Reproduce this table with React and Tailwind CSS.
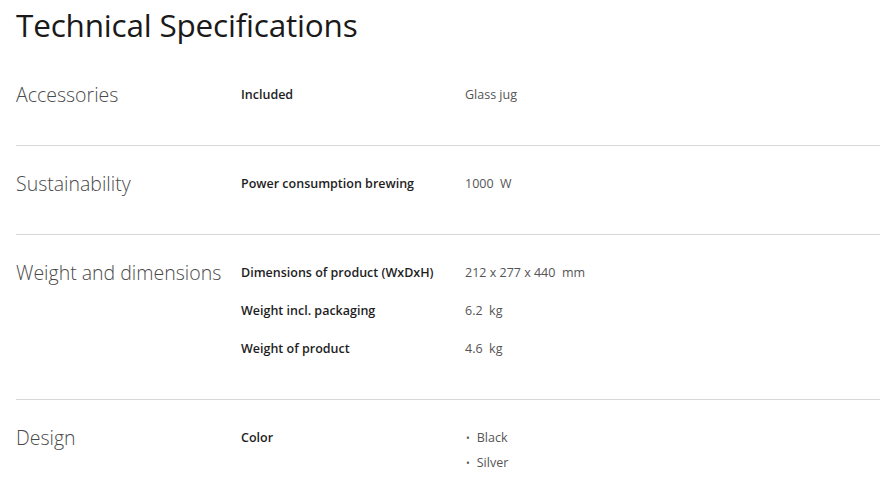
const specs = [
  {
    category: "Accessories",
    rows: [{ name: "Included", values: ["Glass jug"] }],
  },
  {
    category: "Sustainability",
    rows: [{ name: "Power consumption brewing", values: ["1000  W"] }],
  },
  {
    category: "Weight and dimensions",
    rows: [
      { name: "Dimensions of product (WxDxH)", values: ["212 x 277 x 440  mm"] },
      { name: "Weight incl. packaging", values: ["6.2  kg"] },
      { name: "Weight of product", values: ["4.6  kg"] },
    ],
  },
  {
    category: "Design",
    rows: [{ name: "Color", values: ["Black", "Silver"], list: true }],
  },
];

function SpecRow({ row }) {
  return (
    <div className="flex">
      <div className="w-[224px] text-[12.5px] leading-5 font-semibold text-[#1e1e1e]">{row.name}</div>
      <div className="text-[12.5px] leading-5 text-[#555] whitespace-pre">
        {row.list ? (
          <ul className="flex flex-col gap-[5px]">
            {row.values.map((v) => (
              <li key={v} className="flex items-center">
                <span className="ml-[1px] mr-[7px] text-[10px]">•</span>
                {v}
              </li>
            ))}
          </ul>
        ) : (
          row.values[0]
        )}
      </div>
    </div>
  );
}

export default function App() {
  return (
    <main className="min-h-screen bg-white pl-4 pr-[11px] font-['Open_Sans',sans-serif]">
      <h1 className="pt-[7px] text-[31.5px] leading-9 text-[#1a1a1a] tracking-[-0.2px]">Technical Specifications</h1>
      <div className="mt-[14px]">
        {specs.map((section, i) => (
          <section
            key={section.category}
            className={`flex pt-[28px] pb-[40px] ${i > 0 ? "border-t border-[#d8d8d8]" : ""}`}
          >
            <h2 className="w-[225px] text-[19.5px] leading-5 font-light text-[#4a4a4a]">{section.category}</h2>
            <div className="flex flex-col gap-[18px]">
              {section.rows.map((row) => (
                <SpecRow key={row.name} row={row} />
              ))}
            </div>
          </section>
        ))}
      </div>
    </main>
  );
}
